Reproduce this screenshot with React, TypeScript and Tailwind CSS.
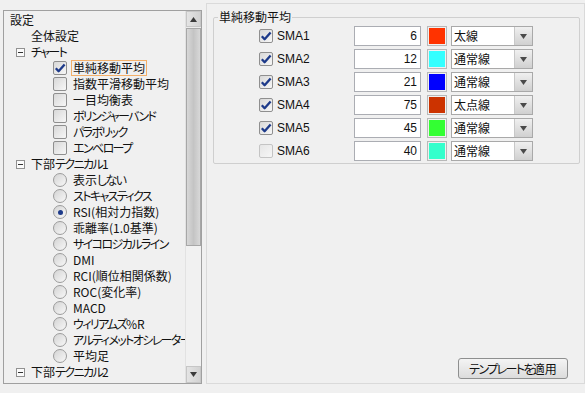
import React from "react";

type Node =
  | { kind: "root"; label: string }
  | { kind: "leaf"; label: string }
  | { kind: "group"; label: string }
  | { kind: "check"; label: string; checked?: boolean; selected?: boolean }
  | { kind: "radio"; label: string; checked?: boolean };

const tree: Node[] = [
  { kind: "root", label: "設定" },
  { kind: "leaf", label: "全体設定" },
  { kind: "group", label: "チャート" },
  { kind: "check", label: "単純移動平均", checked: true, selected: true },
  { kind: "check", label: "指数平滑移動平均" },
  { kind: "check", label: "一目均衡表" },
  { kind: "check", label: "ボリンジャーバンド" },
  { kind: "check", label: "パラボリック" },
  { kind: "check", label: "エンベロープ" },
  { kind: "group", label: "下部テクニカル1" },
  { kind: "radio", label: "表示しない" },
  { kind: "radio", label: "ストキャスティクス" },
  { kind: "radio", label: "RSI(相対力指数)", checked: true },
  { kind: "radio", label: "乖離率(1.0基準)" },
  { kind: "radio", label: "サイコロジカルライン" },
  { kind: "radio", label: "DMI" },
  { kind: "radio", label: "RCI(順位相関係数)" },
  { kind: "radio", label: "ROC(変化率)" },
  { kind: "radio", label: "MACD" },
  { kind: "radio", label: "ウィリアムズ%R" },
  { kind: "radio", label: "アルティメットオシレーター" },
  { kind: "radio", label: "平均足" },
  { kind: "group", label: "下部テクニカル2" },
];

const smaRows = [
  { name: "SMA1", on: true, value: 6, color: "#ff3300", line: "太線" },
  { name: "SMA2", on: true, value: 12, color: "#33ffff", line: "通常線" },
  { name: "SMA3", on: true, value: 21, color: "#0000ff", line: "通常線" },
  { name: "SMA4", on: true, value: 75, color: "#cc3300", line: "太点線" },
  { name: "SMA5", on: true, value: 45, color: "#33ff33", line: "通常線" },
  { name: "SMA6", on: false, value: 40, color: "#33ffcc", line: "通常線" },
];

// kana in the original UI font is narrower than the kanji, so tighten kana runs
const Jp = ({ text }: { text: string }) => (
  <>
    {text.split(/([\u3040-\u30ff]+)/).map((part, i) =>
      /^[\u3040-\u30ff]+$/.test(part) ? (
        <span key={i} className="tracking-[-1.6px]">
          {part}
        </span>
      ) : (
        <React.Fragment key={i}>{part}</React.Fragment>
      )
    )}
  </>
);

const CheckBox = ({ checked, faded }: { checked?: boolean; faded?: boolean }) => (
  <span
    className={
      "w-[14px] h-[14px] shrink-0 border rounded-[2px] flex items-center justify-center bg-linear-to-br " +
      (faded
        ? "border-[#c4c4c4] from-[#e6e6e6] to-[#f6f6f6]"
        : "border-[#8f8f8f] from-[#d8d8d8] to-[#f7f7f7]")
    }
  >
    {checked && (
      <svg width="12" height="12" viewBox="0 0 12 12">
        <path
          d="M1.8 6.2 L4.6 9.2 L10.6 2.4"
          stroke="#1d3a8a"
          strokeWidth="2.3"
          fill="none"
          strokeLinejoin="round"
        />
      </svg>
    )}
  </span>
);

const Radio = ({ checked }: { checked?: boolean }) => (
  <span className="w-[14px] h-[14px] shrink-0 rounded-full border border-[#9c9c9c] bg-linear-to-br from-[#d4d4d4] to-[#f8f8f8] flex items-center justify-center">
    {checked && <span className="w-[5px] h-[5px] rounded-full bg-[#1d3a8a]" />}
  </span>
);

const Expander = () => (
  <span className="w-[9px] h-[9px] shrink-0 border border-[#919191] bg-[#fbfbfb] flex items-center justify-center">
    <span className="w-[5px] h-px bg-[#333]" />
  </span>
);

const TreeRow = ({ node }: { node: Node }) => {
  if (node.kind === "root")
    return <div className="h-[16px] flex items-center pl-[6px]">{node.label}</div>;
  if (node.kind === "leaf")
    return <div className="h-[16px] flex items-center pl-[27px]">{node.label}</div>;
  if (node.kind === "group")
    return (
      <div className="h-[16px] flex items-center pl-[12px] gap-[6px] whitespace-nowrap">
        <Expander />
        <span>
          <Jp text={node.label} />
        </span>
      </div>
    );
  return (
    <div className="h-[16px] flex items-center pl-[49px] gap-[4px] whitespace-nowrap">
      {node.kind === "check" ? <CheckBox checked={node.checked} /> : <Radio checked={node.checked} />}
      <span
        className={
          "h-[16px] leading-[14px] px-px border " +
          (node.kind === "check" && node.selected ? "border-[#f3b06a]" : "border-transparent")
        }
      >
        <Jp text={node.label} />
      </span>
    </div>
  );
};

const ScrollBar = () => (
  <div className="w-[16px] shrink-0 flex flex-col bg-[#ececec] border-l border-[#e2e2e2]">
    <div className="h-[16px] flex items-center justify-center bg-linear-to-r from-[#e4e4e4] to-[#d2d2d2] border border-[#c6c6c6]">
      <svg width="7" height="5" viewBox="0 0 7 5">
        <path d="M3.5 0 L7 5 L0 5 Z" fill="#3a3a3a" />
      </svg>
    </div>
    <div className="h-[218px] mt-px border border-[#a7a7a7] bg-linear-to-r from-[#d8d8d8] via-[#c4c4c4] to-[#d8d8d8]" />
    <div className="flex-1 bg-[#f1f1f1]" />
    <div className="h-[17px] flex items-center justify-center bg-linear-to-r from-[#e4e4e4] to-[#d2d2d2] border border-[#c6c6c6]">
      <svg width="7" height="5" viewBox="0 0 7 5">
        <path d="M0 0 L7 0 L3.5 5 Z" fill="#3a3a3a" />
      </svg>
    </div>
  </div>
);

const Combo = ({ text }: { text: string }) => (
  <div className="w-[82px] h-[20px] flex border border-[#a9a9a9] bg-white">
    <span className="flex-1 pl-[2px] leading-[18px]">{text}</span>
    <span className="w-[18px] flex items-center justify-center bg-linear-to-b from-[#f0f0f0] to-[#d0d0d0] border-l border-[#c8c8c8]">
      <svg width="7" height="5" viewBox="0 0 7 5">
        <path d="M0 0 L7 0 L3.5 5 Z" fill="#4a4a4a" />
      </svg>
    </span>
  </div>
);

export default function App() {
  return (
    <div
      className="w-[585px] h-[393px] bg-[#f0f0f0] flex text-[12px] text-[#111] [font-feature-settings:'palt']"
      style={{ fontFamily: '"Noto Sans CJK JP", "Noto Sans", sans-serif' }}
    >
      {/* tree */}
      <div className="ml-[3px] mt-[10px] w-[199px] h-[374px] border border-[#a0a0a0] flex bg-[#f0f0f0]">
        <div className="flex-1 min-w-0 overflow-hidden pt-px">
          {tree.map((n, i) => (
            <TreeRow key={i} node={n} />
          ))}
        </div>
        <ScrollBar />
      </div>

      {/* settings panel */}
      <div className="ml-[4px] mt-[3px] w-[380px] h-[381px] border border-[#dadada] flex flex-col pl-[6px] pt-[5px]">
        <fieldset className="w-[367px] h-[155px] border border-[#cfcfcf] rounded-[2px]">
          <legend className="ml-[4px] px-px leading-[16px]">単純移動平均</legend>
          <div className="mt-px flex flex-col gap-[3px]">
            {smaRows.map((r) => (
              <div key={r.name} className="h-[20px] flex items-center">
                <span className="ml-[45px]">
                  <CheckBox checked={r.on} faded={!r.on} />
                </span>
                <span
                  className="w-[81px] pl-[4px] text-[12px]"
                  style={{ fontFamily: '"Liberation Sans", sans-serif' }}
                >
                  {r.name}
                </span>
                <div
                  className="w-[67px] h-[20px] border border-[#abadb3] bg-white text-right pr-[3px] leading-[18px]"
                  style={{ fontFamily: '"Liberation Sans", sans-serif' }}
                >
                  {r.value}
                </div>
                <div className="ml-[6px] w-[20px] h-[20px] border border-[#b8b8b8] p-px bg-[#f0f0f0]">
                  <div className="w-full h-full" style={{ backgroundColor: r.color }} />
                </div>
                <div className="ml-[4px]">
                  <Combo text={r.line} />
                </div>
              </div>
            ))}
          </div>
        </fieldset>
        <button className="mt-auto mb-[4px] mr-[16px] self-end w-[110px] h-[21px] rounded-[3px] border border-[#8e8f8f] bg-linear-to-b from-[#f4f4f4] to-[#dcdcdc] text-[12px] leading-[19px]">
          <Jp text="テンプレートを適用" />
        </button>
      </div>
    </div>
  );
}
